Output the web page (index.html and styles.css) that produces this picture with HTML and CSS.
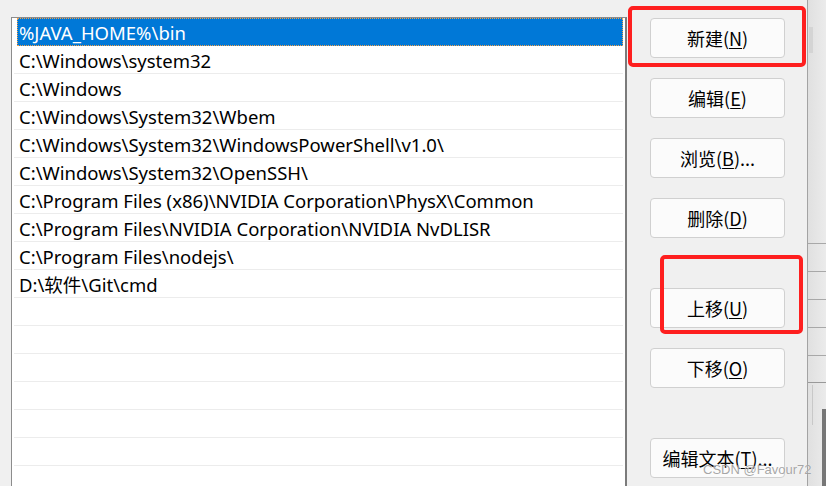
FILE: index.html
```html
<!DOCTYPE html>
<html lang="zh-CN">
<head>
<meta charset="utf-8">
<title>编辑环境变量</title>
<link rel="stylesheet" href="styles.css">
</head>
<body>
<div class="window">
  <div class="list">
    <div class="row selected"><span class="cell">%JAVA_HOME%\bin</span></div>
    <div class="row"><span class="cell">C:\Windows\system32</span></div>
    <div class="row"><span class="cell">C:\Windows</span></div>
    <div class="row"><span class="cell">C:\Windows\System32\Wbem</span></div>
    <div class="row"><span class="cell">C:\Windows\System32\WindowsPowerShell\v1.0\</span></div>
    <div class="row"><span class="cell">C:\Windows\System32\OpenSSH\</span></div>
    <div class="row"><span class="cell">C:\Program Files (x86)\NVIDIA Corporation\PhysX\Common</span></div>
    <div class="row"><span class="cell">C:\Program Files\NVIDIA Corporation\NVIDIA NvDLISR</span></div>
    <div class="row"><span class="cell">C:\Program Files\nodejs\</span></div>
    <div class="row"><span class="cell">D:\软件\Git\cmd</span></div>
    <div class="row"></div>
    <div class="row"></div>
    <div class="row"></div>
    <div class="row"></div>
    <div class="row"></div>
    <div class="row"></div>
    <div class="row"></div>
  </div>
  <div class="buttons">
    <button class="btn">新建(<u>N</u>)</button>
    <button class="btn">编辑(<u>E</u>)</button>
    <button class="btn">浏览(<u>B</u>)...</button>
    <button class="btn">删除(<u>D</u>)</button>
    <button class="btn btn-gap">上移(<u>U</u>)</button>
    <button class="btn">下移(<u>O</u>)</button>
    <button class="btn btn-gap">编辑文本(<u>T</u>)...</button>
  </div>
  <div class="strip">
    <div class="thumb"></div>
    <div class="strip-lines">
      <div class="sline"></div>
      <div class="sline"></div>
      <div class="sline"></div>
      <div class="sline"></div>
      <div class="sline"></div>
    </div>
    <div class="strip-bottom"><div class="dark"></div></div>
  </div>
  <div class="mark mark-new"></div>
  <div class="mark mark-up"></div>
  <div class="watermark">CSDN @Favour72</div>
</div>
</body>
</html>
```
FILE: styles.css
```css
html, body {
  margin: 0;
  padding: 0;
}
body {
  background: #f0f0f0;
  font-family: "Noto Sans", "Noto Sans CJK SC", sans-serif;
  color: #000;
}
.window {
  position: relative;
  width: 826px;
  height: 486px;
  overflow: hidden;
  display: flex;
  align-items: flex-start;
}
.list {
  margin: 17px 0 0 11px;
  width: 612px;
  height: 500px;
  background: #fff;
  border-top: 1px solid #8c8c8c;
  border-left: 1px solid #8c8c8c;
  border-right: 2px solid #7b7b7b;
  padding-left: 1px;
  flex: none;
}
.row {
  height: 28px;
  box-sizing: border-box;
  border-bottom: 1px solid #ececec;
  margin-left: 1px;
  margin-right: 2px;
  display: flex;
}
.cell {
  flex: 1;
  padding-left: 5px;
  font-size: 18.5px;
  line-height: 29px;
  white-space: nowrap;
}
.row.selected {
  border-bottom: none;
}
.row.selected .cell {
  margin-left: 3px;
  padding-left: 2px;
  background: #0078d7;
  color: #fff;
  line-height: 29px;
  height: 28px;
  outline: 1px dotted #f5a047;
  outline-offset: -1px;
}
.buttons {
  flex: none;
  width: 181px;
  height: 486px;
  box-sizing: border-box;
  padding: 18px 0 0 23px;
  display: flex;
  flex-direction: column;
  gap: 20px;
  border-right: 1px solid #a3a3a3;
}
.btn {
  width: 135px;
  height: 40px;
  box-sizing: border-box;
  border: 1px solid #d0d0d0;
  border-radius: 4px;
  background: #fbfbfb;
  font-family: "Noto Sans CJK SC", "Noto Sans", sans-serif;
  font-size: 18px;
  color: #000;
  padding: 0;
}
.btn u {
  text-decoration-thickness: 1px;
  text-underline-offset: 2px;
}
.btn-gap {
  margin-top: 30px;
}
.strip {
  flex: 1;
  height: 486px;
  background: linear-gradient(to right, #e0e0e0, #ebebeb);
  display: flex;
  flex-direction: column;
}
.thumb {
  margin: 27px 0 0 1px;
  width: 4px;
  height: 26px;
  background: #d4d4d4;
}
.strip-lines {
  margin-top: 190px;
  display: flex;
  flex-direction: column;
  gap: 27px;
}
.sline {
  height: 1px;
  background: #a8a8a8;
}
.strip-bottom {
  margin-top: 26px;
  flex: 1;
  border-top: 1px solid #999;
  display: flex;
  justify-content: flex-end;
  padding-left: 4px;
  position: relative;
}
.strip-bottom::before {
  content: "";
  position: absolute;
  left: 4px;
  top: 2px;
  width: 1px;
  height: 40px;
  background: #c8c8c8;
}
.dark {
  margin-top: 26px;
  width: 4px;
  background: #777;
}
.mark {
  position: absolute;
  border: 4px solid #fe1f1f;
  border-radius: 5px;
  box-sizing: border-box;
}
.mark-new {
  left: 628px;
  top: 6px;
  width: 178px;
  height: 61px;
}
.mark-up {
  left: 660px;
  top: 255px;
  width: 143px;
  height: 79px;
}
.watermark {
  position: absolute;
  left: 703px;
  top: 462px;
  font-family: "Liberation Sans", sans-serif;
  font-size: 13px;
  color: rgba(150, 150, 150, 0.85);
  text-shadow: 0 0 1px rgba(255, 255, 255, 0.8);
  white-space: nowrap;
}
```
